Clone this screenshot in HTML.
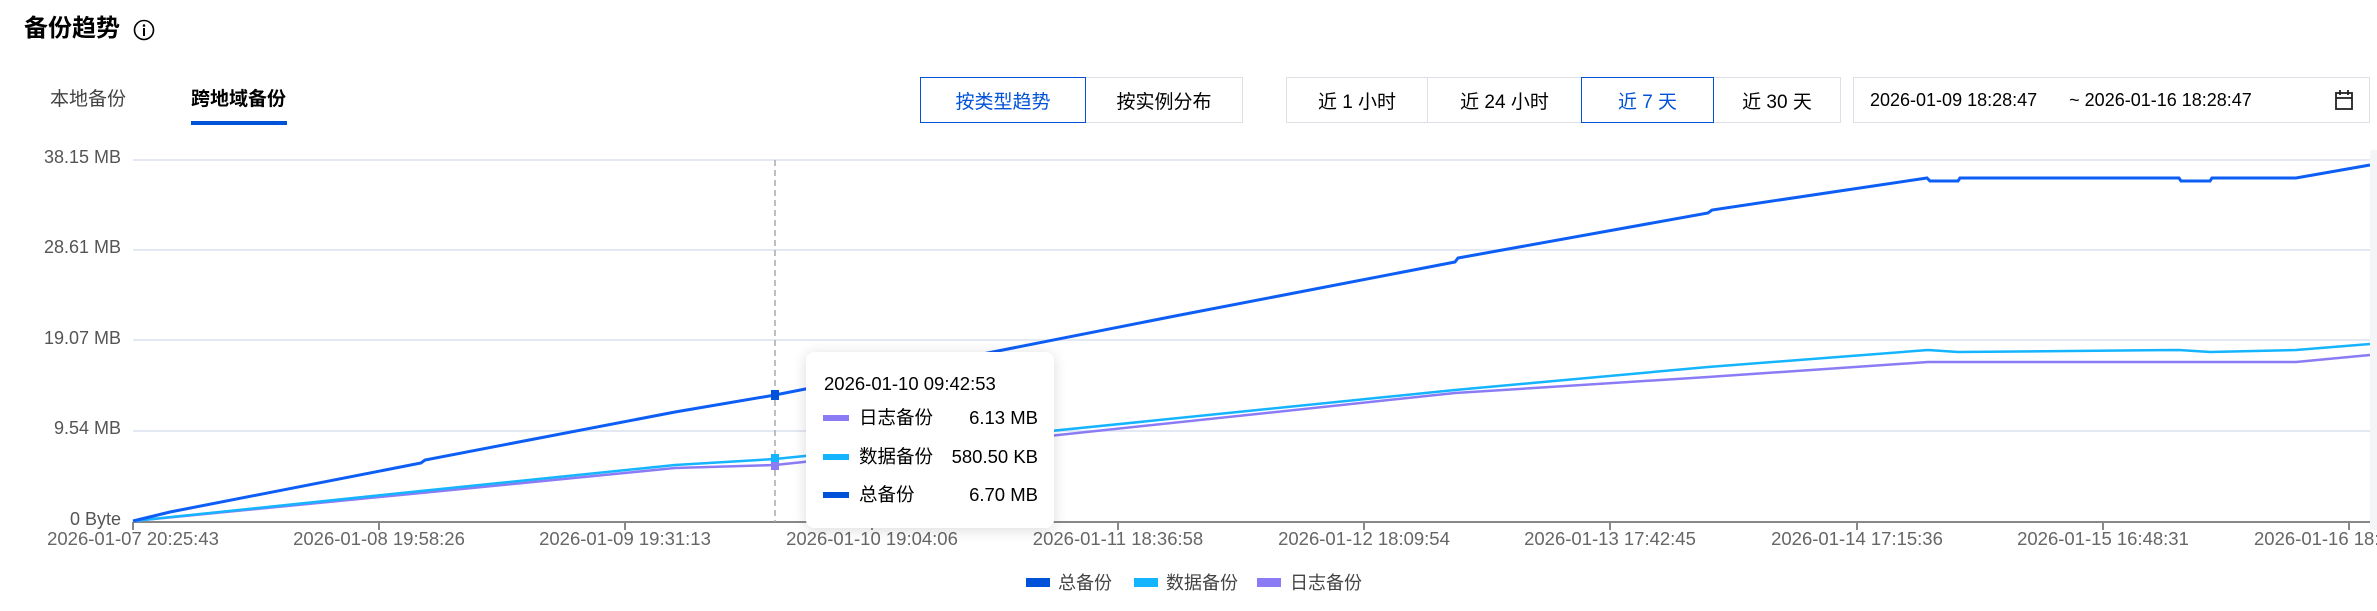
<!DOCTYPE html>
<html><head><meta charset="utf-8">
<style>
*{margin:0;padding:0;box-sizing:border-box}
body{width:2377px;height:611px;background:#fff;position:relative;overflow:hidden;font-family:"Liberation Sans","Noto Sans CJK SC",sans-serif;color:#000}
.a{position:absolute;white-space:nowrap;line-height:24px}
.btn{position:absolute;top:77px;height:46px;border:1px solid #dcdfe6;display:flex;align-items:center;justify-content:center;font-size:19px;color:#000;background:#fff}
.sel{border:1.5px solid #0052d9;color:#0052d9;z-index:2}
.yl{position:absolute;right:2256px;font-size:18px;color:#555;text-align:right;white-space:nowrap}
.xl{position:absolute;top:528px;font-size:18.5px;color:#666;transform:translateX(-50%);white-space:nowrap}
</style></head><body>
<div class="a" style="left:24px;top:17px;font-size:24px;font-weight:bold">备份趋势</div>
<svg class="a" style="left:133px;top:19px" width="22" height="22" viewBox="0 0 22 22"><circle cx="11" cy="11" r="9.5" fill="none" stroke="#000" stroke-width="1.6"/><circle cx="11" cy="6.5" r="1.3"/><rect x="10" y="9" width="2" height="8"/></svg>
<div class="a" style="left:50px;top:88px;font-size:19px;color:#444">本地备份</div>
<div class="a" style="left:191px;top:88px;font-size:19px;font-weight:bold">跨地域备份</div>
<div class="a" style="left:191px;top:121px;width:96px;height:4px;background:#0052d9"></div>

<div class="btn sel" style="left:920px;width:166px">按类型趋势</div>
<div class="btn" style="left:1085px;width:158px">按实例分布</div>

<div class="btn" style="left:1286px;width:142px">近 1 小时</div>
<div class="btn" style="left:1427px;width:155px">近 24 小时</div>
<div class="btn sel" style="left:1581px;width:133px">近 7 天</div>
<div class="btn" style="left:1713px;width:128px">近 30 天</div>
<div class="btn" style="left:1853px;width:517px;justify-content:flex-start;padding-left:16px;font-size:18px">2026-01-09 18:28:47<span style="margin-left:32px">~ 2026-01-16 18:28:47</span></div>
<svg class="a" style="left:2334px;top:89px" width="20" height="22" viewBox="0 0 20 22"><rect x="2" y="4" width="16" height="16" fill="none" stroke="#222" stroke-width="1.8"/><line x1="2" y1="9" x2="18" y2="9" stroke="#222" stroke-width="1.8"/><line x1="6" y1="1" x2="6" y2="6" stroke="#222" stroke-width="1.8"/><line x1="14" y1="1" x2="14" y2="6" stroke="#222" stroke-width="1.8"/></svg>

<div class="yl" style="top:147px">38.15 MB</div>
<div class="yl" style="top:237px">28.61 MB</div>
<div class="yl" style="top:328px">19.07 MB</div>
<div class="yl" style="top:418px">9.54 MB</div>
<div class="yl" style="top:509px">0 Byte</div>

<svg class="a" style="left:0;top:0" width="2377" height="611">
<g stroke="#e4e8f2" stroke-width="2">
<line x1="133" y1="160" x2="2370" y2="160"/><line x1="133" y1="250" x2="2370" y2="250"/><line x1="133" y1="340" x2="2370" y2="340"/><line x1="133" y1="431" x2="2370" y2="431"/>
</g>
<line x1="133" y1="522" x2="2370" y2="522" stroke="#888" stroke-width="2"/>
<g stroke="#888" stroke-width="2">
<line x1="133" y1="522" x2="133" y2="530"/><line x1="379" y1="522" x2="379" y2="530"/><line x1="625" y1="522" x2="625" y2="530"/><line x1="872" y1="522" x2="872" y2="530"/><line x1="1118" y1="522" x2="1118" y2="530"/><line x1="1364" y1="522" x2="1364" y2="530"/><line x1="1610" y1="522" x2="1610" y2="530"/><line x1="1857" y1="522" x2="1857" y2="530"/><line x1="2103" y1="522" x2="2103" y2="530"/><line x1="2349" y1="522" x2="2349" y2="530"/>
</g>
<line x1="775" y1="160" x2="775" y2="522" stroke="#aaa" stroke-width="1.5" stroke-dasharray="6,4"/>
<polyline fill="none" stroke="#8b7cf6" stroke-width="2.5" points="133,521 421,493 675,468 775,465 1455,393 1708,377 1928,362 2296,362 2370,355"/>
<polyline fill="none" stroke="#14b4ff" stroke-width="2.5" points="133,521 421,491 675,465 775,459 1455,390 1708,367 1928,350 1958,352 2179,350 2210,352 2296,350 2370,344"/>
<polyline fill="none" stroke="#0d5ef5" stroke-width="3" points="133,521 170,512 421,463 425,460 675,412 775,395 1175,316 1455,262 1458,258 1708,213 1712,210 1927,178 1930,181 1958,181 1960,178 2179,178 2181,181 2210,181 2212,178 2296,178 2370,165"/>
<rect x="771" y="390" width="8" height="10" fill="#0052d9"/>
<rect x="771" y="454" width="8" height="10" fill="#14b4ff"/>
<rect x="771" y="462" width="8" height="8" fill="#8b7cf6"/>
<rect x="2370" y="150" width="7" height="380" fill="#f4f5f7"/>
</svg>

<div class="xl" style="left:133px">2026-01-07 20:25:43</div>
<div class="xl" style="left:379px">2026-01-08 19:58:26</div>
<div class="xl" style="left:625px">2026-01-09 19:31:13</div>
<div class="xl" style="left:872px">2026-01-10 19:04:06</div>
<div class="xl" style="left:1118px">2026-01-11 18:36:58</div>
<div class="xl" style="left:1364px">2026-01-12 18:09:54</div>
<div class="xl" style="left:1610px">2026-01-13 17:42:45</div>
<div class="xl" style="left:1857px">2026-01-14 17:15:36</div>
<div class="xl" style="left:2103px">2026-01-15 16:48:31</div>
<div class="xl" style="left:2254px;transform:none">2026-01-16 18:21:26</div>

<div class="a" style="left:806px;top:352px;width:248px;height:176px;background:#fff;border-radius:8px;box-shadow:0 2px 14px rgba(0,0,0,0.15);font-size:18.5px">
<div class="a" style="left:18px;top:20px">2026-01-10 09:42:53</div>
<div class="a" style="left:17px;top:63px;width:26px;height:6px;background:#8b7cf6"></div>
<div class="a" style="left:53px;top:54px">日志备份</div><div class="a" style="right:16px;top:54px">6.13 MB</div>
<div class="a" style="left:17px;top:102px;width:26px;height:6px;background:#14b4ff"></div>
<div class="a" style="left:53px;top:93px">数据备份</div><div class="a" style="right:16px;top:93px">580.50 KB</div>
<div class="a" style="left:17px;top:140px;width:26px;height:6px;background:#0052d9"></div>
<div class="a" style="left:53px;top:131px">总备份</div><div class="a" style="right:16px;top:131px">6.70 MB</div>
</div>

<div class="a" style="left:1026px;top:578px;width:24px;height:9px;background:#0052d9"></div>
<div class="a" style="left:1058px;top:571px;font-size:18px;color:#444">总备份</div>
<div class="a" style="left:1134px;top:578px;width:24px;height:9px;background:#14b4ff"></div>
<div class="a" style="left:1166px;top:571px;font-size:18px;color:#444">数据备份</div>
<div class="a" style="left:1257px;top:578px;width:24px;height:9px;background:#8b7cf6"></div>
<div class="a" style="left:1290px;top:571px;font-size:18px;color:#444">日志备份</div>
</body></html>
